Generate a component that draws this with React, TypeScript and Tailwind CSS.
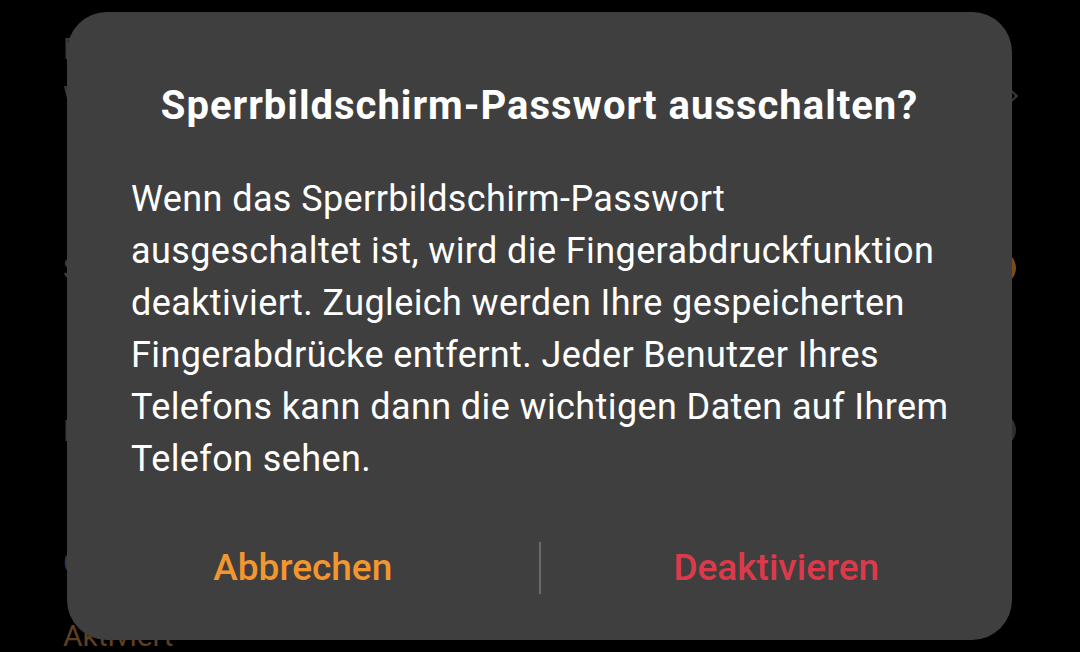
import React from 'react';

const font = { fontFamily: 'Roboto, "Noto Sans", sans-serif' };

// dimmed settings page behind the dialog, only its edges show
const BackgroundPage: React.FC = () => (
  <div className="flex flex-col pl-[63px] pr-[64px] text-[30px] text-[#3a3a3a]">
    <div className="h-[28px]" />
    <div className="flex items-center justify-between h-[40px]">
      <span>B</span>
    </div>
    <div className="flex items-center justify-between h-[56px]">
      <span>W</span>
      <span className="w-[10px] h-[10px] rotate-45 border-t-2 border-r-2 border-[#3a3a3a]" />
    </div>
    <div className="h-[40px]" />
    <div className="flex items-center justify-between h-[208px]">
      <span>S</span>
      <span className="w-[34px] h-[34px] rounded-full bg-[#7a4c1c]" />
    </div>
    <div className="flex items-center justify-between h-[116px]">
      <span>F</span>
      <span className="w-[34px] h-[34px] rounded-full bg-[#2e2e2e]" />
    </div>
    <div className="h-[52px]" />
    <div className="h-[40px]">G</div>
    <div className="mt-[38px] text-[#5e3f20] text-[30px] leading-[36px]">Aktiviert</div>
  </div>
);

const App: React.FC = () => {
  return (
    <div className="relative w-[1080px] h-[652px] bg-black overflow-hidden" style={font}>
      <BackgroundPage />

      <div className="absolute left-[67px] top-[12px] w-[945px] h-[628px] rounded-[40px] bg-[#3f3f3f] flex flex-col">
        <h1 className="pt-[70px] text-center text-white font-bold text-[40px] leading-[48px] tracking-[1px]">
          Sperrbildschirm-Passwort ausschalten?
        </h1>
        <p className="mt-[43px] pl-[64px] pr-[52px] text-white text-[36px] leading-[52px] tracking-[0.4px]">
          Wenn das Sperrbildschirm-Passwort ausgeschaltet ist, wird die Fingerabdruckfunktion
          deaktiviert. Zugleich werden Ihre gespeicherten Fingerabdrücke entfernt. Jeder Benutzer
          Ihres Telefons kann dann die wichtigen Daten auf Ihrem Telefon sehen.
        </p>
        <div className="mt-[57px] flex items-center h-[52px]">
          <button className="flex-1 text-center text-[37px] font-medium text-[#f2962f]">Abbrechen</button>
          <div className="w-[2px] h-[52px] bg-[#6a6a6a]" />
          <button className="flex-1 text-center text-[37px] font-medium text-[#dc3a4a]">Deaktivieren</button>
        </div>
      </div>
    </div>
  );
};

export default App;
